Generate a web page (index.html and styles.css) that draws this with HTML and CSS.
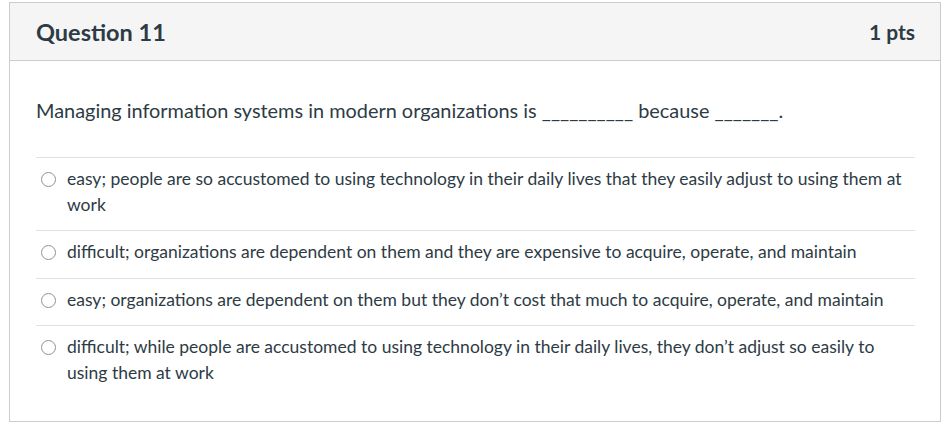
FILE: index.html
```html
<!DOCTYPE html>
<html>
<head>
<meta charset="utf-8">
<link rel="stylesheet" href="styles.css">
</head>
<body>
<div class="question">
  <div class="header">
    <span class="title">Question 11</span>
    <span class="points">1 pts</span>
  </div>
  <div class="body">
    <div class="text">Managing information systems in modern organizations is __________ because _______.</div>
    <div class="answers">
      <label class="answer"><span class="radio"></span><span class="atext">easy; people are so accustomed to using technology in their daily lives that they easily adjust to using them at work</span></label>
      <label class="answer"><span class="radio"></span><span class="atext">difficult; organizations are dependent on them and they are expensive to acquire, operate, and maintain</span></label>
      <label class="answer"><span class="radio"></span><span class="atext">easy; organizations are dependent on them but they don’t cost that much to acquire, operate, and maintain</span></label>
      <label class="answer"><span class="radio"></span><span class="atext">difficult; while people are accustomed to using technology in their daily lives, they don’t adjust so easily to using them at work</span></label>
    </div>
  </div>
</div>
</body>
</html>
```
FILE: styles.css
```css
html, body { margin: 0; padding: 0; background: #fff; }
body {
  font-family: Lato, "Open Sans", sans-serif;
  color: #2d3b45;
  padding: 2px 0 0 9px;
}
.question {
  width: 930px;
  height: 418px;
  border: 1px solid #c7cdd1;
  box-sizing: content-box;
}
.header {
  background: #f5f5f5;
  border-bottom: 1px solid #c7cdd1;
  height: 57px;
  display: flex;
  align-items: center;
  justify-content: space-between;
  padding: 0 25px 0 26px;
}
.title {
  font-size: 23.5px;
  font-weight: bold;
  color: #2d3b45;
}
.points {
  font-size: 21px;
  font-weight: bold;
  color: #2d3b45;
}
.body {
  padding: 35px 25px 0 26px;
}
.text {
  font-size: 19.9px;
  line-height: 28px;
  margin-bottom: 33px;
}
.answers { display: flex; flex-direction: column; }
.answer {
  display: flex;
  align-items: flex-start;
  border-top: 1px solid #dfe2e5;
  padding: 8px 0 13px 5px;
  font-size: 17.5px;
  line-height: 25.5px;
}
.radio {
  flex: none;
  width: 13px;
  height: 13px;
  border: 1px solid #8b9298;
  border-radius: 50%;
  margin: 6px 11px 0 0;
  background: #fff;
}
.atext { flex: 1; }
```
